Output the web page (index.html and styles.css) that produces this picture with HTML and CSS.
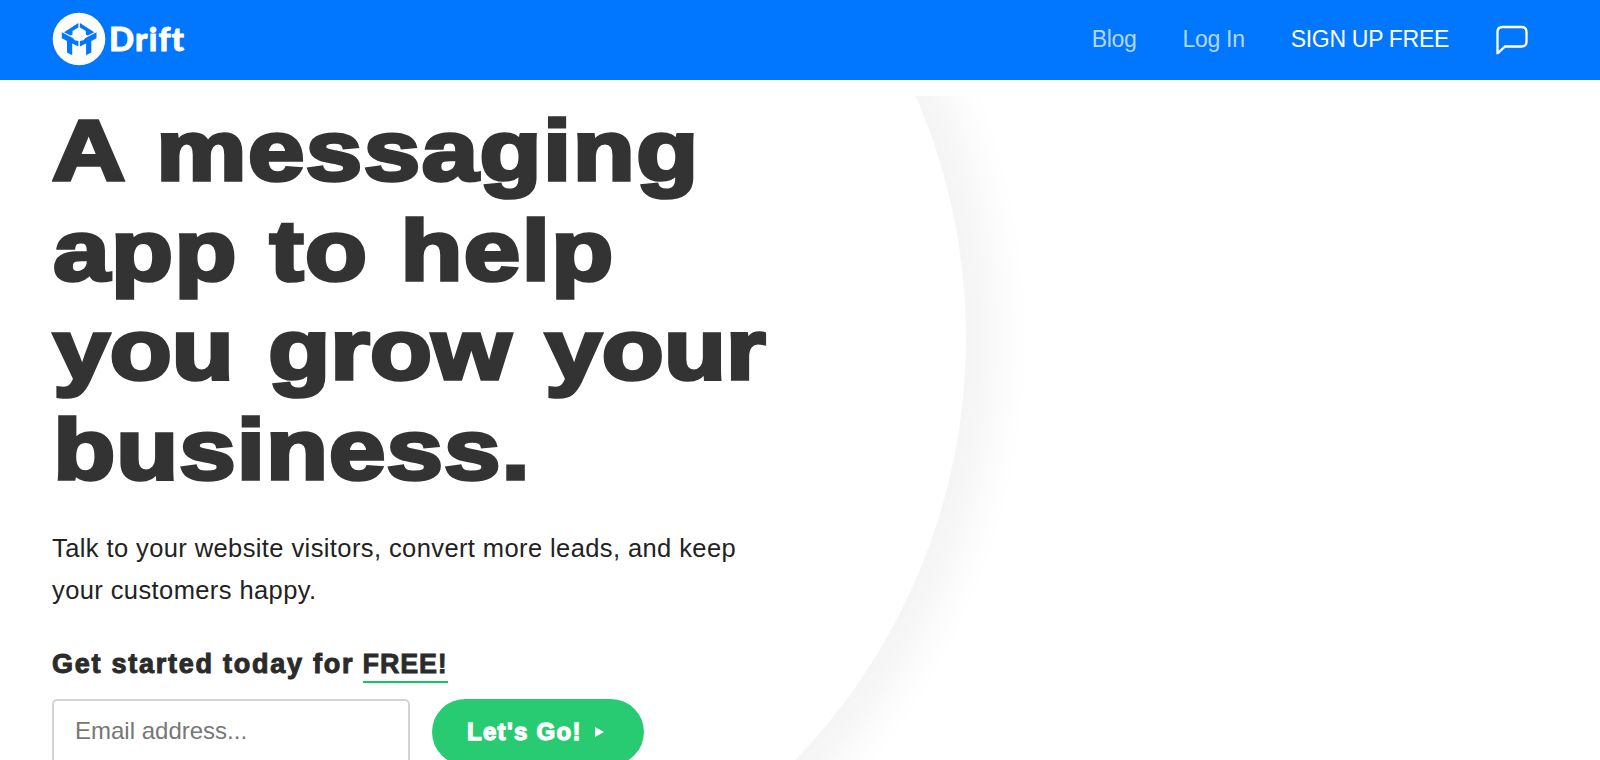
FILE: index.html
```
<!DOCTYPE html>
<html lang="en">
<head>
  <meta charset="UTF-8">
  <meta name="viewport" content="width=device-width, initial-scale=1.0">
  <title>Drift</title>
  <link rel="stylesheet" href="styles.css">
</head>
<body>

  <header class="navbar">
    <a class="logo" href="#">
      <svg class="logo-mark" viewBox="0 0 54 54">
        <circle cx="27" cy="27" r="26.3" fill="#fff"/>
        <g fill="#0176ff">
          <path d="M26.400 11v4.500L20.500 19v3.500l-2 1.100-6.500-3.400z"/>
          <path d="M27.900 11v4.500l5.900 3.500v3.500l2 1.100 6.500-3.400z"/>
          <path d="M9.800 20.300l11 5.700 2 2.200 3.600.8v5.500l-3.600-1.700-2.600-1.200v11.600L15 40.500V29l-5.200-2.800z"/>
          <path d="M44.500 20.300l-11 5.700-2 2.200-3.600.8v5.500l3.600-1.700 2.600-1.200v11.600l5.200-2.700V29l5.200-2.800z"/>
        </g>
      </svg>
      <span class="logo-text">Drift</span>
    </a>
    <nav class="nav-links">
      <a href="#">Blog</a>
      <a href="#">Log In</a>
      <a class="signup" href="#">SIGN UP FREE</a>
      <svg class="chat-icon" viewBox="0 0 34 30">
        <path d="M2.500 28V7q0-5 5-5h19q5 0 5 5v9.500q0 5-5 5H10l-7 6.500z" fill="none" stroke="#fff" stroke-width="2.300"/>
      </svg>
    </nav>
  </header>

  <main class="hero">
    <div class="circle"></div>
    <div class="content">
      <h1>
        <span class="line line-1">A messaging</span>
        <span class="line line-2">app to help</span>
        <span class="line line-3">you grow your</span>
        <span class="line line-4">business.</span>
      </h1>
      <p class="lead">Talk to your website visitors, convert more leads, and keep<br>your customers happy.</p>
      <h2><span class="started">Get started today for</span> <span class="free">FREE!</span></h2>
      <form class="signup-form">
        <input type="email" placeholder="Email address...">
        <button type="button"><span>Let's Go!</span><i class="arrow"></i></button>
      </form>
    </div>
  </main>

</body>
</html>
```
FILE: styles.css
```
* {
  box-sizing: border-box;
  margin: 0;
  padding: 0;
}

body {
  height: 760px;
  overflow: hidden;
  font-family: "Liberation Sans", Arial, sans-serif;
  color: #333;
  background-color: #fff;
}

a {
  color: inherit;
  text-decoration: none;
}

.navbar {
  display: flex;
  justify-content: space-between;
  align-items: center;
  height: 80px;
  padding: 0 71px 2px 52px;
  background-color: #0176ff;
  color: white;
}

.logo {
  display: flex;
  align-items: center;
  gap: 3px;
}

.logo-mark {
  width: 54px;
  height: 54px;
}

.logo-text {
  padding-bottom: 3px;
  font-family: Lato, sans-serif;
  font-size: 33px;
  font-weight: 900;
  letter-spacing: 1.2px;
  -webkit-text-stroke: 0.8px white;
}

.nav-links {
  display: flex;
  align-items: center;
  gap: 46px;
  font-size: 23px;
  letter-spacing: -0.3px;
  color: #b3d6ff;
}

.signup {
  color: white;
}

.chat-icon {
  width: 34px;
  height: 30px;
  margin-top: 2px;
}

.hero {
  position: relative;
  height: 664px;
  margin-top: 16px;
  overflow: hidden;
}

/* big white disc behind the text */
.circle {
  position: absolute;
  left: -248px;
  top: -365px;
  width: 1214px;
  height: 1214px;
  border-radius: 50%;
  background-color: #fff;
  box-shadow: 0 0 42px 32px rgba(0, 0, 0, 0.043);
}

.content {
  position: relative;
  padding: 5px 0 0 52px;
}

h1 {
  font-size: 86px;
  line-height: 99.67px;
  font-weight: bold;
}

/* the wide black weight comes from stroke + stretch */
.line {
  display: block;
  width: 800px;
  white-space: nowrap;
  -webkit-text-stroke: 3.6px #333;
  transform: scaleX(1.18);
  transform-origin: left;
}

.line-1 {
  letter-spacing: 1.25px;
  word-spacing: 3px;
}

.line-2 {
  padding-left: 1px;
  letter-spacing: 1.2px;
  word-spacing: 2px;
}

.line-3 {
  padding-left: 1px;
  letter-spacing: 0.1px;
  word-spacing: 5px;
}

.line-4 {
  padding-left: 1px;
  letter-spacing: 0.9px;
}

.lead {
  margin-top: 27px;
  font-size: 25.5px;
  line-height: 42.500px;
  letter-spacing: 0.4px;
  color: #222;
}

h2 {
  margin-top: 31px;
  font-size: 27px;
  line-height: 42px;
  letter-spacing: 0.8px;
  color: #2b2b2b;
}

.started {
  letter-spacing: 1.75px;
  -webkit-text-stroke: 1px #2b2b2b;
}

.free {
  display: inline-block;
  height: 40px;
  border-bottom: 2px solid #14c466;
  -webkit-text-stroke: 0.8px #2b2b2b;
}

.signup-form {
  display: flex;
  gap: 22px;
  margin-top: 14px;
}

input {
  width: 358px;
  height: 65px;
  padding: 0 21px;
  border: 2px solid #d4d4d4;
  border-radius: 5px;
  font-family: inherit;
  font-size: 24px;
}

input::placeholder {
  color: #777;
}

button {
  display: flex;
  align-items: center;
  gap: 13px;
  width: 212px;
  height: 66px;
  padding-left: 35px;
  border: none;
  border-radius: 33px;
  background-color: #29cb72;
  color: white;
  font-family: inherit;
  font-size: 24px;
  font-weight: bold;
  letter-spacing: 1.3px;
  -webkit-text-stroke: 1.3px white;
}

.arrow {
  border-left: 9px solid white;
  border-top: 5.500px solid transparent;
  border-bottom: 5.500px solid transparent;
}
```
